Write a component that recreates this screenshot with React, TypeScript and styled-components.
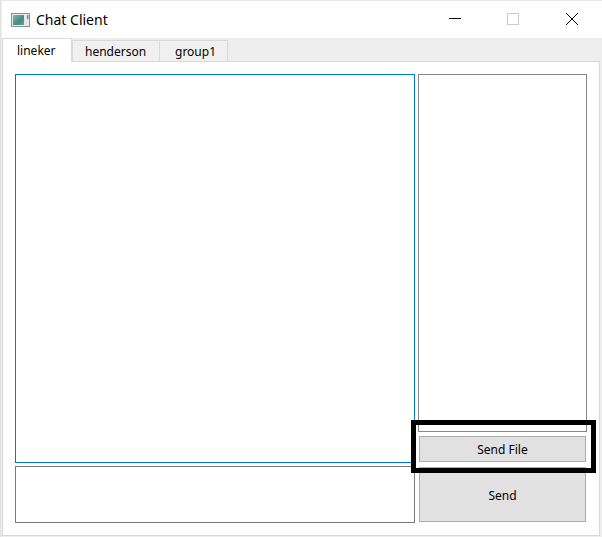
import React from 'react';
import styled, { createGlobalStyle } from 'styled-components';

const GlobalStyle = createGlobalStyle`
  html, body {
    margin: 0;
    padding: 0;
    background: #f0f0f0;
  }
`;

const Window = styled.div`
  position: relative;
  width: 602px;
  height: 537px;
  box-sizing: border-box;
  padding-left: 1px;
  background: #eeeeee;
  border-left: 1px solid #e2e2e2;
  border-top: 1px solid #e9e9e9;
  font-family: "Noto Sans", "Liberation Sans", sans-serif;
  overflow: hidden;
`;

const TitleBar = styled.div`
  display: flex;
  align-items: center;
  height: 37px;
  padding-left: 9px;
  background: #ffffff;
`;

const AppIcon = styled.svg`
  width: 19px;
  height: 14px;
  flex: none;
  margin-right: 6px;
`;

const Title = styled.span`
  font-size: 14px;
  color: #000000;
  flex: 1;
`;

const Controls = styled.div`
  display: grid;
  grid-template-columns: 58px 58px 60px;
  align-self: flex-start;
`;

const ControlButton = styled.div`
  display: flex;
  align-items: center;
  justify-content: center;
  height: 36px;

  svg {
    display: block;
  }
`;

const TabBar = styled.div`
  display: flex;
  align-items: flex-end;
  height: 23px;
`;

const Tab = styled.div<{ $active?: boolean; $width: number; $inset: number }>`
  display: flex;
  align-items: center;
  box-sizing: border-box;
  width: ${(p) => p.$width}px;
  height: ${(p) => (p.$active ? 24 : 22)}px;
  padding: ${(p) => (p.$active ? 0 : 1)}px 0 0 ${(p) => p.$inset}px;
  margin-right: ${(p) => (p.$active ? 0 : -1)}px;
  margin-bottom: -1px;
  position: relative;
  z-index: ${(p) => (p.$active ? 1 : 0)};
  border: 1px solid #d9d9d9;
  border-bottom: ${(p) => (p.$active ? 'none' : '1px solid #d9d9d9')};
  background: ${(p) => (p.$active ? '#ffffff' : '#f0f0f0')};
  font-size: 12px;
  color: #000000;
`;

const Pane = styled.div`
  display: grid;
  grid-template-columns: 400px 169px;
  grid-template-rows: 358px 4px 26px 5px 55px;
  column-gap: 3px;
  box-sizing: border-box;
  width: 598px;
  height: 475px;
  padding: 12px 0 0 12px;
  background: #ffffff;
  border: 1px solid #d9d9d9;
`;

const ChatLog = styled.div`
  grid-column: 1;
  grid-row: 1 / 4;
  box-sizing: border-box;
  height: 389px;
  border: 1px solid #0078d7;
`;

const MemberList = styled.div`
  grid-column: 2;
  grid-row: 1;
  box-sizing: border-box;
  border: 1px solid #828790;
`;

const MessageInput = styled.div`
  grid-column: 1;
  grid-row: 5;
  box-sizing: border-box;
  height: 57px;
  margin-top: -1px;
  border: 1px solid #7a7a7a;
`;

const ActionButton = styled.div<{ $row: number }>`
  grid-column: 2;
  grid-row: ${(p) => p.$row};
  display: flex;
  align-items: center;
  justify-content: center;
  box-sizing: border-box;
  margin: 0 1px;
  background: #e1e1e1;
  border: 1px solid #adadad;
  font-size: 12px;
  color: #000000;
`;

const SendButton = styled(ActionButton)`
  padding-top: 2px;
`;

const Highlight = styled.div`
  position: absolute;
  left: 410px;
  top: 419px;
  width: 185px;
  height: 53px;
  box-sizing: border-box;
  border: 5px solid #000000;
`;

const App: React.FC = () => {
  return (
    <>
      <GlobalStyle />
      <Window>
        <TitleBar>
          <AppIcon viewBox="0 0 19 14">
            <defs>
              <linearGradient id="screen" x1="0" y1="0" x2="1" y2="1">
                <stop offset="0" stopColor="#8fb3b0" />
                <stop offset="0.6" stopColor="#3f8f7c" />
                <stop offset="1" stopColor="#5f9fb8" />
              </linearGradient>
            </defs>
            <rect x="0.5" y="0.5" width="18" height="13" fill="#e6e9ea" stroke="#8a9096" />
            <rect x="2" y="2" width="11" height="10" fill="url(#screen)" />
            <rect x="16" y="2" width="1.5" height="4" fill="#6a8a90" />
          </AppIcon>
          <Title>Chat Client</Title>
          <Controls>
            <ControlButton>
              <svg width="12" height="12" viewBox="0 0 12 12">
                <path d="M0 5.5h12" stroke="#000" strokeWidth="1" />
              </svg>
            </ControlButton>
            <ControlButton>
              <svg width="12" height="12" viewBox="0 0 12 12">
                <rect x="0.5" y="0.5" width="11" height="11" fill="none" stroke="#cccccc" />
              </svg>
            </ControlButton>
            <ControlButton>
              <svg width="12" height="12" viewBox="0 0 12 12">
                <path d="M0 0l12 12M12 0l-12 12" stroke="#000" strokeWidth="1" />
              </svg>
            </ControlButton>
          </Controls>
        </TitleBar>
        <TabBar>
          <Tab $active $width={70} $inset={14}>lineker</Tab>
          <Tab $width={88} $inset={12}>henderson</Tab>
          <Tab $width={69} $inset={15}>group1</Tab>
        </TabBar>
        <Pane>
          <ChatLog />
          <MemberList />
          <ActionButton $row={3}>Send File</ActionButton>
          <MessageInput />
          <SendButton $row={5}>Send</SendButton>
        </Pane>
        <Highlight />
      </Window>
    </>
  );
};

export default App;
